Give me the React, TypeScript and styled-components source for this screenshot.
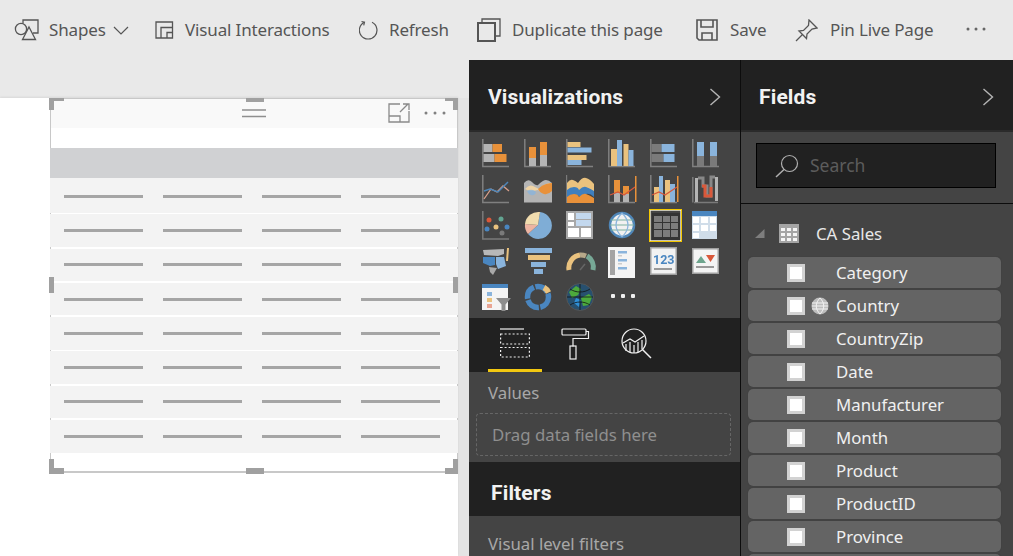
import React from "react";
import styled, { createGlobalStyle } from "styled-components";

const GlobalStyle = createGlobalStyle`
  html, body {
    margin: 0;
    padding: 0;
    background: #ffffff;
    font-family: "Noto Sans", "Open Sans", sans-serif;
  }
  * { box-sizing: border-box; }
`;

const Root = styled.div`
  width: 1013px;
  height: 556px;
  overflow: hidden;
  display: flex;
  flex-direction: column;
  background: #e9e9e9;
`;

const Toolbar = styled.div`
  height: 60px;
  flex-shrink: 0;
  padding: 0 0 0 14px;
  display: flex;
  align-items: center;
  background: #e9e9e9;
  color: #555555;
  font-size: 17px;
  letter-spacing: -0.15px;
`;

const ToolItem = styled.div<{ $w: number; $gap: number }>`
  width: ${({ $w }) => $w}px;
  flex-shrink: 0;
  height: 30px;
  display: flex;
  align-items: center;
  gap: ${({ $gap }) => $gap}px;
  white-space: nowrap;
  svg { flex-shrink: 0; }
`;

const ToolLabel = styled.span`
  line-height: 24px;
`;

const MoreButton = styled.div`
  width: 40px;
  height: 30px;
  padding-bottom: 3px;
  display: flex;
  align-items: center;
`;

const Body = styled.div`
  flex: 1;
  min-height: 0;
  display: flex;
`;

const CanvasArea = styled.div`
  width: 469px;
  flex-shrink: 0;
  padding: 38px 11px 0 0;
  background: linear-gradient(#e9e9e9, #e9e9e9 38px, #e4e4e4 38px);
`;

const Page = styled.div`
  height: 100%;
  padding-left: 50px;
  background: #ffffff;
  box-shadow: 0 -1px 2px rgba(0, 0, 0, 0.08);
`;

const Visual = styled.div`
  position: relative;
  width: 408px;
  height: 375px;
  background: #ffffff;
  border-left: 1px solid #c8c8c8;
  border-right: 1px solid #c8c8c8;
  border-bottom: 2px solid #c8c8c8;
`;

const VisualHeader = styled.div`
  height: 30px;
  margin-bottom: 20px;
  display: grid;
  grid-template-columns: 1fr 24px 1fr;
  align-items: center;
  background: #f9f9f9;
  box-shadow: inset 0 1px #c8c8c8;
  color: #8a8a8a;
`;

const VisualActions = styled.div`
  grid-column: 3;
  display: flex;
  justify-content: flex-end;
  align-items: center;
  gap: 14px;
  padding-right: 11px;
`;

const TableBand = styled.div`
  height: 32px;
  margin: 0 -1px;
  background: #d0d1d3;
  border-bottom: 2px solid #f3f3f3;
`;

const TableRows = styled.div`
  margin: 0 -1px;
  display: flex;
  flex-direction: column;
  gap: 1.7px;
`;

const TableRow = styled.div`
  height: 32.6px;
  padding: 0 19px 0 14px;
  display: grid;
  grid-template-columns: repeat(4, 79px);
  column-gap: 20px;
  align-items: center;
  background: #f3f3f3;
`;

const Dash = styled.div`
  height: 3px;
  background: #a5a5a5;
`;

const Corner = styled.div<{ $v: "top" | "bottom"; $h: "left" | "right" }>`
  position: absolute;
  width: ${({ $h }) => ($h === "left" ? 15 : 13)}px;
  height: ${({ $v }) => ($v === "top" ? 12 : 15)}px;
  ${({ $v }) => ($v === "top" ? "top: 0;" : "bottom: -3px;")}
  ${({ $h }) => ($h === "left" ? "left: -2px;" : "right: -1px;")}
  border-${({ $v }) => $v}: ${({ $v }) => ($v === "top" ? 3 : 6)}px solid #a0a0a0;
  border-${({ $h }) => $h}: 5px solid #a0a0a0;
`;

const EdgeHandle = styled.div<{ $side: "top" | "bottom" | "left" | "right" }>`
  position: absolute;
  background: #a0a0a0;
  ${({ $side }) =>
    $side === "top"
      ? "top: 0; left: 195px; width: 18px; height: 4px;"
      : $side === "bottom"
      ? "bottom: -3px; left: 195px; width: 18px; height: 6px;"
      : $side === "left"
      ? "left: -2px; top: 179px; width: 5px; height: 16px;"
      : "right: -1px; top: 179px; width: 5px; height: 16px;"}
`;

const Panel = styled.div<{ $w: number }>`
  width: ${({ $w }) => $w}px;
  flex-shrink: 0;
  display: flex;
  flex-direction: column;
  background: #444444;
`;

const PanelHeader = styled.div<{ $pl: number }>`
  height: 72px;
  flex-shrink: 0;
  padding: 18px 19px 0 ${({ $pl }) => $pl}px;
  display: flex;
  justify-content: space-between;
  background: #212121;
  border-bottom: 2px solid #2b2b2b;
`;

const PanelTitle = styled.div`
  font-family: Roboto, "Noto Sans", sans-serif;
  font-size: 21px;
  font-weight: 700;
  line-height: 38px;
  color: #f2f2f2;
  letter-spacing: 0.15px;
`;

const Divider = styled.div`
  width: 1px;
  flex-shrink: 0;
  background: #0c0c0c;
`;

const VizGrid = styled.div`
  height: 186px;
  flex-shrink: 0;
  padding: 7px 0 0 13px;
  display: grid;
  grid-template-columns: repeat(6, 42px);
  grid-auto-rows: 36px;
  align-content: start;
`;

const VizCell = styled.div`
  position: relative;
  width: 32px;
  height: 32px;
  svg {
    display: block;
    filter: blur(0.5px);
  }
`;

const SelectedMark = styled.div`
  position: absolute;
  left: -1px;
  top: -2px;
  width: 33px;
  height: 33px;
  border: 1.5px solid #f5c800;
  box-shadow: inset 0 0 0 0.7px #f4f0d8;
`;

const MoreDots = styled.div`
  height: 26px;
  padding-left: 3px;
  display: flex;
  align-items: center;
  gap: 6px;
`;

const Dot = styled.span`
  width: 4px;
  height: 4px;
  background: #f0f0f0;
  border-radius: 1px;
`;

const TabBar = styled.div`
  height: 54px;
  flex-shrink: 0;
  padding-left: 19px;
  display: flex;
  background: #212121;
`;

const Tab = styled.div<{ $active?: boolean }>`
  width: 54px;
  height: 54px;
  margin-right: 6px;
  padding-top: 10px;
  display: flex;
  justify-content: center;
  border-bottom: 3px solid ${({ $active }) => ($active ? "#f2c811" : "transparent")};
`;

const WellSection = styled.div`
  height: 90px;
  flex-shrink: 0;
  padding: 7px 9px 0 7px;
`;

const WellLabel = styled.div`
  padding-left: 12px;
  font-size: 16.8px;
  line-height: 27px;
  color: #a8a8a8;
`;

const DropZone = styled.div`
  height: 43px;
  margin-top: 7px;
  padding-left: 15px;
  display: flex;
  align-items: center;
  border: 1px dashed #666666;
  border-radius: 4px;
  font-size: 16.8px;
  color: #8f8f8f;
`;

const FiltersHeader = styled.div`
  height: 54px;
  flex-shrink: 0;
  padding: 8px 0 0 22px;
  display: flex;
  align-items: center;
  background: #212121;
`;

const FiltersBody = styled.div`
  padding: 14px 7px 0;
`;

const SearchSection = styled.div`
  height: 72px;
  flex-shrink: 0;
  padding: 11px 17px 0 15px;
  border-bottom: 1px solid #0c0c0c;
`;

const SearchBox = styled.div`
  height: 45px;
  padding: 0 0 2px 18px;
  display: flex;
  align-items: center;
  gap: 11px;
  background: #212121;
  border: 1px solid #000000;
  font-size: 17.5px;
  color: #5c5c5c;
`;

const TableTitle = styled.div`
  height: 53px;
  flex-shrink: 0;
  padding: 5px 0 0 14px;
  display: flex;
  align-items: center;
  font-size: 16.8px;
  color: #e8e8e8;
`;

const FieldList = styled.div`
  padding: 0 12px 0 7px;
  display: flex;
  flex-direction: column;
  gap: 2px;
`;

const FieldRow = styled.div`
  height: 31px;
  flex-shrink: 0;
  padding-left: 39px;
  display: flex;
  align-items: center;
  background: #646464;
  border-radius: 5px;
  box-shadow: 0 0 1px #333333;
  font-size: 16.8px;
  color: #f0f0f0;
`;

const Check = styled.div`
  width: 18px;
  height: 18px;
  flex-shrink: 0;
  background: #ffffff;
  border: 3px solid #d2d2d2;
`;

const FieldIconSlot = styled.div`
  width: 31px;
  height: 18px;
  flex-shrink: 0;
  padding-left: 6px;
`;

const DARK = "#555555";

const ShapesIcon = () => (
  <svg width="25" height="22" viewBox="0 0 25 22" fill="none" stroke={DARK} strokeWidth="1.3">
    <circle cx="7" cy="10" r="5.6" />
    <path d="M9 4.5V1h15v13h-5" />
    <path d="M15 8l6.5 12.5H8.5z" fill="#e9e9e9" />
  </svg>
);

const InteractionsIcon = () => (
  <svg width="20" height="18" viewBox="0 0 20 18" fill="none" stroke={DARK} strokeWidth="1.3">
    <path d="M1 17V1h16.5v16z" />
    <path d="M6 17V6.5h11.5" />
    <path d="M12 17v-5.5h5.5" />
  </svg>
);

const RefreshIcon = () => (
  <svg width="20" height="20" viewBox="0 0 20 20" fill="none" stroke={DARK} strokeWidth="1.2">
    <path d="M13 2.3A8.8 8.8 0 1 1 5.5 2.2" />
    <path d="M2.5 1.5l3 .8-.8 3" />
  </svg>
);

const DuplicateIcon = () => (
  <svg width="24" height="24" viewBox="0 0 24 24" fill="none" stroke={DARK} strokeWidth="2">
    <rect x="1" y="5" width="17" height="18" />
    <path d="M5 5V1h18v17h-5" strokeWidth="1.3" />
  </svg>
);

const SaveIcon = () => (
  <svg width="22" height="22" viewBox="0 0 22 22" fill="none" stroke={DARK} strokeWidth="1.6">
    <path d="M1 1h20v20H3l-2-2z" />
    <path d="M5 1v7h12V1" />
    <path d="M6 21v-7h10v7" />
  </svg>
);

const PinIcon = () => (
  <svg width="23" height="23" viewBox="0 0 23 23" fill="none" stroke={DARK} strokeWidth="1.3">
    <path d="M14 1l8 8-5 1-5 5-.5 4.5L4 12l4.5-.5 5-5z" />
    <path d="M7.5 15.5L1 22" />
  </svg>
);

const ThreeDots = ({ color, gap = 8 }: { color: string; gap?: number }) => (
  <svg width={gap * 2 + 4} height="4" viewBox={`0 0 ${gap * 2 + 4} 4`} fill={color}>
    <circle cx="2" cy="2" r="1.5" />
    <circle cx={gap + 2} cy="2" r="1.5" />
    <circle cx={gap * 2 + 2} cy="2" r="1.5" />
  </svg>
);

const Chevron = () => (
  <svg width="12" height="18" viewBox="0 0 12 18" fill="none" stroke="#b5b5b5" strokeWidth="1.4" style={{ marginTop: 10 }}>
    <path d="M1.5 1l9 8-9 8" />
  </svg>
);

const Axis = ({ c = "#808080" }: { c?: string }) => <path d="M.8 0v27.5H27" stroke={c} strokeWidth="1.5" fill="none" />;

const O = "#e8913a";
const G = "#b4b4b4";
const T = "#eac27e";
const B = "#8ab4dc";
const D = "#7a7a7a";
const R = "#d9583a";

const Ic = ({ children }: { children: React.ReactNode }) => (
  <svg width="32" height="32" viewBox="0 0 32 32">
    {children}
  </svg>
);

const vizIcons: React.ReactNode[] = [
  <Ic><Axis /><rect x="1.5" y="5" width="9" height="8" fill={G} /><rect x="10.5" y="5" width="9.5" height="8" fill={O} /><rect x="1.5" y="15" width="11" height="8" fill={G} /><rect x="12.5" y="15" width="12" height="8" fill={O} /></Ic>,
  <Ic><Axis /><rect x="5" y="8" width="7" height="11" fill={O} /><rect x="5" y="19" width="7" height="8" fill={G} /><rect x="16" y="3" width="7" height="13" fill={O} /><rect x="16" y="16" width="7" height="11" fill={G} /></Ic>,
  <Ic><Axis /><rect x="1.5" y="3" width="13" height="5" fill={T} /><rect x="1.5" y="8.5" width="24" height="5" fill={B} /><rect x="1.5" y="16" width="19" height="5" fill={T} /><rect x="1.5" y="21" width="14" height="5" fill={B} /></Ic>,
  <Ic><Axis /><rect x="3" y="10" width="6" height="17" fill={T} /><rect x="9" y="1" width="5" height="26" fill={B} /><rect x="15.5" y="5" width="5" height="22" fill={T} /><rect x="20.5" y="11" width="5" height="16" fill={B} /></Ic>,
  <Ic><Axis /><rect x="1.5" y="5" width="10" height="8" fill={D} /><rect x="11.5" y="5" width="13" height="8" fill={B} /><rect x="1.5" y="15" width="12" height="8" fill={D} /><rect x="13.5" y="15" width="11" height="8" fill={B} /></Ic>,
  <Ic><Axis /><rect x="5" y="3" width="7" height="14" fill={B} /><rect x="5" y="17" width="7" height="10" fill={D} /><rect x="18" y="3" width="7" height="14" fill={B} /><rect x="18" y="17" width="7" height="10" fill={D} /></Ic>,

  <Ic><Axis /><path d="M2 24l7-10 6 3 6-6 6 5" stroke="#d9a08c" strokeWidth="1.3" fill="none" /><path d="M2 16l6-2 8 3 10-10" stroke="#4f86b8" strokeWidth="1.5" fill="none" /></Ic>,
  <Ic><path d="M0 27.5V8q4-5 8-1t6 3q5-5 8-5t6 3v19.500z" fill={G} /><path d="M1 14q4-5 8-3t6 3q4-4 7-5t6-1v7q-4 3-7 3t-7-3q-4 1-7 1t-6-2z" fill="#efd3a4" /><path d="M14 14q4-4 8-5t6-1v8q-4 4-8 3t-6-5z" fill={O} /><path d="M3 16q3-2 6-1t3 3q-2 3-5 2t-4-4z" fill={B} opacity=".8" /></Ic>,
  <Ic><rect x="0" y="0" width="1.2" height="28" fill={D} /><path d="M1 8q3-4 6-3t5 3q4-6 8-5t8 6v8q-4-4-8-3t-6 3q-3-3-6-2t-7 3z" fill={T} /><path d="M1 15q3-3 7-3t5 3q4-4 7-3t8 4v6q-4-4-8-3t-6 3q-3-3-6-2t-7 3z" fill="#3f7fbe" /><path d="M1 22q3-3 7-3t5 3q4-4 7-3t8 4v5H1z" fill={O} /></Ic>,
  <Ic><Axis /><rect x="27" y="1" width="1.5" height="26" fill={O} /><rect x="6" y="5" width="6" height="22" fill={O} /><rect x="6" y="18" width="6" height="9" fill={G} /><rect x="15" y="11" width="6" height="16" fill={O} /><rect x="15" y="19" width="6" height="8" fill={G} /><path d="M2 20l8-3 6 3 11-8" stroke={R} strokeWidth="1.2" fill="none" /></Ic>,
  <Ic><Axis /><rect x="27" y="1" width="1.5" height="26" fill={O} /><rect x="4" y="12" width="5" height="15" fill={T} /><rect x="9" y="1" width="4" height="26" fill={B} /><rect x="15" y="5" width="5" height="22" fill={T} /><rect x="20" y="9" width="5" height="18" fill={B} /><path d="M2 20l7-3 6 3 12-8" stroke={R} strokeWidth="1.2" fill="none" /></Ic>,
  <Ic><path d="M.8 2v25.5M2 27.5h24" stroke={D} strokeWidth="1.5" /><rect x="3" y="3" width="3" height="24" fill={G} /><rect x="23" y="2" width="3" height="24" fill={G} /><path d="M6 3h5v8h4v10h4V2h4" stroke="#888" strokeWidth="3" fill="none" /><path d="M10 11h3v10h6V12" stroke={R} strokeWidth="3" fill="none" /></Ic>,

  <Ic><path d="M.8 0v28H27" stroke={D} strokeWidth="1.5" fill="none" /><circle cx="7" cy="9" r="2.5" fill={R} /><circle cx="19" cy="8" r="2.5" fill="#62a592" /><circle cx="5" cy="18" r="2.5" fill="#4a86c0" /><circle cx="14" cy="16" r="2.5" fill={T} /><circle cx="25" cy="16" r="2.5" fill="#4a86c0" /><circle cx="20" cy="22" r="2.5" fill={D} /></Ic>,
  <Ic><path d="M14 14L16 1a13.5 13.5 0 1 1-12 22z" fill="#7fadd6" /><path d="M14 14L4 23A13.5 13.5 0 0 1 1 13z" fill="#edb4a2" /><path d="M14 14L1 13A13.5 13.5 0 0 1 16 1z" fill="#f1dcae" /></Ic>,
  <Ic><rect x="0" y="0" width="27" height="28" fill="#a8a8a8" /><rect x="2" y="2" width="6" height="7" fill="#fff" /><rect x="2" y="11" width="6" height="4" fill="#fff" /><rect x="10" y="2" width="15" height="6" fill="#c3d8ee" /><rect x="10" y="9" width="15" height="6" fill="#c3d8ee" /><rect x="2" y="17" width="11" height="9" fill="#fff" /><rect x="15" y="17" width="10" height="9" fill="#fff" /></Ic>,
  <Ic><circle cx="14" cy="14" r="12" fill="#f1f1f1" stroke="#4f86b8" strokeWidth="2.5" /><path d="M3 9h22M2 14h24M3 19h22" stroke="#7db29f" strokeWidth="1.2" /><path d="M14 2c-8 8-8 16 0 24M14 2c8 8 8 16 0 24" stroke="#8ab4dc" strokeWidth="1.2" fill="none" /></Ic>,
  <Ic><rect x="2" y="2" width="28" height="27" fill="#333333" /><rect x="4" y="5" width="8" height="6" fill="#7c7c7c" /><rect x="13" y="5" width="7" height="6" fill="#7c7c7c" /><rect x="21" y="5" width="7" height="6" fill="#7c7c7c" /><rect x="4" y="12" width="8" height="6" fill="#7c7c7c" /><rect x="13" y="12" width="7" height="6" fill="#7c7c7c" /><rect x="21" y="12" width="7" height="6" fill="#7c7c7c" /><rect x="4" y="19" width="8" height="7" fill="#7c7c7c" /><rect x="13" y="19" width="7" height="7" fill="#7c7c7c" /><rect x="21" y="19" width="7" height="7" fill="#7c7c7c" /></Ic>,
  <Ic><rect x="0" y="0" width="25" height="28" fill="#d0dde9" /><rect x="0" y="0" width="25" height="5" fill="#4a86c0" /><rect x="1" y="6" width="6" height="6" fill="#fff" /><rect x="9" y="6" width="7" height="6" fill="#fff" /><rect x="18" y="6" width="6" height="6" fill="#fff" /><rect x="1" y="14" width="6" height="6" fill="#fff" /><rect x="9" y="14" width="7" height="6" fill="#fff" /><rect x="18" y="14" width="6" height="6" fill="#fff" /><rect x="1" y="22" width="6" height="5" fill="#fff" /></Ic>,

  <Ic><path d="M1 3l21-1 0 5-6 2-14-1z" fill="#b8b8b8" /><path d="M1 10l12 0 0 8-5 1-7-3z" fill="#4a86c0" /><path d="M14 10l8 0 2 9-8 3-2-5z" fill={B} /><path d="M7 20l8 1-4 7-3-3z" fill="#a9a9a9" /><path d="M25 1l2 0-1 13-2 0z" fill={T} /></Ic>,
  <Ic><rect x="1" y="1" width="27" height="5" fill={B} /><rect x="4" y="8" width="22" height="5" fill={T} /><rect x="7" y="15" width="15" height="5" fill={B} /><rect x="10" y="22" width="9" height="5" fill={B} /></Ic>,
  <Ic><path d="M3 23a13 13 0 0 1 11-15" stroke={T} strokeWidth="5" fill="none" /><path d="M14 8a13 13 0 0 1 6 1" stroke="#b7a98a" strokeWidth="5" fill="none" /><path d="M21 9a13 13 0 0 1 6 14" stroke="#77a896" strokeWidth="5" fill="none" /><path d="M14 23l5-6" stroke="#666" strokeWidth="1.5" /></Ic>,
  <Ic><rect x="0" y="0" width="27" height="31" fill="#f4f4f4" /><rect x="2" y="3" width="5" height="25" fill="#a3a3a3" /><rect x="10" y="4" width="9" height="2.5" fill={B} /><rect x="10" y="8" width="4" height="1.5" fill="#ccc" /><rect x="10" y="12" width="9" height="2.5" fill={B} /><rect x="10" y="16" width="4" height="1.5" fill="#ccc" /><rect x="10" y="20" width="9" height="2.5" fill={B} /></Ic>,
  <Ic><rect x="0" y="0" width="27" height="28" fill="#a0a0a0" /><rect x="1.5" y="1.5" width="24" height="25" fill="#f2f2f2" /><text x="3" y="17" fontFamily="Roboto, sans-serif" fontSize="12.5" fontWeight="700" fill="#4a86c0">123</text><rect x="4" y="21" width="18" height="2" fill="#999" /></Ic>,
  <Ic><rect x="0" y="1" width="27" height="26" fill="#a0a0a0" /><rect x="1.5" y="2.5" width="24" height="23" fill="#f4f4f4" /><path d="M4 16l5-7 5 7z" fill="#6ea58e" /><path d="M14 8h9l-4.5 7z" fill={R} /><rect x="4" y="19" width="18" height="2" fill="#999" /></Ic>,

  <Ic><rect x="0" y="1" width="26" height="26" fill="#f4f4f4" /><rect x="0" y="1" width="26" height="4" fill="#4a86c0" /><rect x="5" y="9" width="5" height="4" fill={B} /><rect x="5" y="15" width="5" height="4" fill={T} /><rect x="5" y="21" width="5" height="4" fill="#e9a594" /><path d="M14 15h15l-5.500 6.500V28h-4v-6.500z" fill="#8d8d8d" /></Ic>,
  <Ic><circle cx="14" cy="14" r="10.5" fill="none" stroke="#4a86c0" strokeWidth="5.5" strokeDasharray="14 1.5" /><path d="M20 4.5a11 11 0 0 1 4.5 5" stroke={T} strokeWidth="5.5" fill="none" /></Ic>,
  <Ic><circle cx="14" cy="14" r="13.5" fill="#27506f" stroke="#555" strokeWidth="1" /><path d="M3 9l7-6 5 3-3 6-6 3zM15 15l8-4 3 3-3 8-6 1z" fill="#4caa3c" /><path d="M10 15l5 2-2 7-5-4z" fill="#2f8fd6" /><path d="M1 14h26M14 1v26M4 6c6 4 14 4 20 0M4 22c6-4 14-4 20 0" stroke="#111" strokeWidth=".8" fill="none" /></Ic>,
];

const fields = ["Category", "Country", "CountryZip", "Date", "Manufacturer", "Month", "Product", "ProductID", "Province"];

const App = () => (
  <Root>
    <GlobalStyle />
    <Toolbar>
      <ToolItem $w={141} $gap={10}>
        <ShapesIcon />
        <ToolLabel>Shapes</ToolLabel>
        <svg width="16" height="9" viewBox="0 0 16 9" fill="none" stroke={DARK} strokeWidth="1.2" style={{ marginLeft: -3 }}><path d="M1 1l7 7 7-7" /></svg>
      </ToolItem>
      <ToolItem $w={204} $gap={10}><InteractionsIcon /><ToolLabel>Visual Interactions</ToolLabel></ToolItem>
      <ToolItem $w={118} $gap={10}><RefreshIcon /><ToolLabel>Refresh</ToolLabel></ToolItem>
      <ToolItem $w={219} $gap={11}><DuplicateIcon /><ToolLabel>Duplicate this page</ToolLabel></ToolItem>
      <ToolItem $w={99} $gap={12}><SaveIcon /><ToolLabel>Save</ToolLabel></ToolItem>
      <ToolItem $w={171} $gap={12}><PinIcon /><ToolLabel>Pin Live Page</ToolLabel></ToolItem>
      <MoreButton><ThreeDots color="#666666" gap={8} /></MoreButton>
    </Toolbar>
    <Body>
      <CanvasArea>
        <Page>
          <Visual>
            <VisualHeader>
              <svg style={{ gridColumn: 2 }} width="24" height="9" viewBox="0 0 24 9" stroke="#8f8f8f" strokeWidth="1.5"><path d="M0 1h24M0 7.5h24" /></svg>
              <VisualActions>
                <svg width="22" height="20" viewBox="0 0 22 20" fill="none" stroke="#8a8a8a" strokeWidth="1.3"><path d="M21 8v11H1V1h11" /><path d="M1 13h11v6" /><path d="M12 9l8-8M15 1h6v6" /></svg>
                <ThreeDots color="#808080" gap={9} />
              </VisualActions>
            </VisualHeader>
            <TableBand />
            <TableRows>
              {Array.from({ length: 8 }, (_, row) => (
                <TableRow key={row}>
                  <Dash /><Dash /><Dash /><Dash />
                </TableRow>
              ))}
            </TableRows>
            <Corner $v="top" $h="left" />
            <Corner $v="top" $h="right" />
            <Corner $v="bottom" $h="left" />
            <Corner $v="bottom" $h="right" />
            <EdgeHandle $side="top" />
            <EdgeHandle $side="bottom" />
            <EdgeHandle $side="left" />
            <EdgeHandle $side="right" />
          </Visual>
        </Page>
      </CanvasArea>

      <Panel $w={271}>
        <PanelHeader $pl={19}>
          <PanelTitle>Visualizations</PanelTitle>
          <Chevron />
        </PanelHeader>
        <VizGrid>
          {vizIcons.map((icon, i) => (
            <VizCell key={i}>
              {icon}
              {i === 16 && <SelectedMark />}
            </VizCell>
          ))}
          <MoreDots><Dot /><Dot /><Dot /></MoreDots>
        </VizGrid>
        <TabBar>
          <Tab $active>
            <svg width="30" height="30" viewBox="0 0 30 30" fill="none" stroke="#f0f0f0" strokeWidth="1.2">
              <path d="M0 1h24" />
              <rect x=".6" y="6" width="28.8" height="10" strokeDasharray="2 2" />
              <rect x=".6" y="19.5" width="28.8" height="9.5" strokeDasharray="2 2" />
            </svg>
          </Tab>
          <Tab>
            <svg width="30" height="32" viewBox="0 0 30 32" fill="none" stroke="#f0f0f0" strokeWidth="1.2">
              <rect x="2" y="1" width="24" height="6" rx="1" />
              <path d="M26 3.5h2.5v7H13v8" />
              <rect x="10" y="18" width="6" height="13" />
            </svg>
          </Tab>
          <Tab>
            <svg width="31" height="32" viewBox="0 0 31 32" fill="none" stroke="#f0f0f0" strokeWidth="1.2" style={{ marginLeft: 2 }}>
              <circle cx="13" cy="13" r="12" />
              <path d="M21.5 21.5L30 30" strokeWidth="1.5" />
              <path d="M5 23V16M9 24V14M13 25V17M17 24V14M21 21V12" />
              <path d="M2 15l7-4 5 3 9-6" />
            </svg>
          </Tab>
        </TabBar>
        <WellSection>
          <WellLabel>Values</WellLabel>
          <DropZone>Drag data fields here</DropZone>
        </WellSection>
        <FiltersHeader>
          <PanelTitle>Filters</PanelTitle>
        </FiltersHeader>
        <FiltersBody>
          <WellLabel>Visual level filters</WellLabel>
        </FiltersBody>
      </Panel>

      <Divider />

      <Panel $w={272}>
        <PanelHeader $pl={18}>
          <PanelTitle>Fields</PanelTitle>
          <Chevron />
        </PanelHeader>
        <SearchSection>
          <SearchBox>
            <svg width="24" height="24" viewBox="0 0 24 24" fill="none" stroke="#b0b0b0" strokeWidth="1.2" style={{ marginTop: 2 }}>
              <circle cx="14.5" cy="9.5" r="8" />
              <path d="M9 15.5L1 23" strokeWidth="1.5" />
            </svg>
            Search
          </SearchBox>
        </SearchSection>
        <TableTitle>
          <svg width="10" height="9" viewBox="0 0 10 9" fill="#7e7e7e"><path d="M9.5 0v9H0z" /></svg>
          <svg style={{ margin: "0 17px 0 14px" }} width="20" height="19" viewBox="0 0 20 19">
            <rect width="20" height="19" fill="#a5a5a5" />
            <path d="M2 4h4v3H2zM8 4h4v3H8zM14 4h4v3h-4zM2 9h4v3H2zM8 9h4v3H8zM14 9h4v3h-4zM2 14h4v3H2zM8 14h4v3H8zM14 14h4v3h-4z" fill="#f5f5f5" />
          </svg>
          CA Sales
        </TableTitle>
        <FieldList>
          {fields.map((name) => (
            <FieldRow key={name}>
              <Check />
              <FieldIconSlot>
                {name === "Country" && (
                  <svg width="18" height="18" viewBox="0 0 18 18">
                    <circle cx="9" cy="9" r="8.5" fill="#bdbdbd" />
                    <path d="M1 6h16M1 9h16M1 12h16" stroke="#f2f2f2" strokeWidth="1" />
                    <path d="M9 1c-5 5-5 11 0 16M9 1c5 5 5 11 0 16" stroke="#f2f2f2" strokeWidth="1" fill="none" />
                  </svg>
                )}
              </FieldIconSlot>
              {name}
            </FieldRow>
          ))}
          <FieldRow />
        </FieldList>
      </Panel>
    </Body>
  </Root>
);

export default App;
